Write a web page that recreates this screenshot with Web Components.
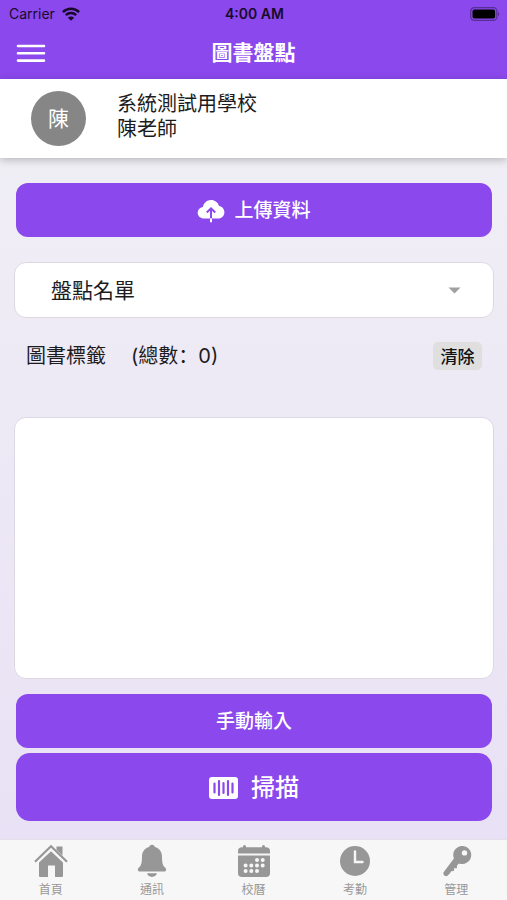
<!DOCTYPE html>
<html lang="zh-Hant">
<head>
<meta charset="utf-8">
<meta name="viewport" content="width=device-width, initial-scale=1">
<title>圖書盤點</title>
<style>
  html { --accent: #8b48ed; --line: #dcd9e2; --muted: #979797; }
  body {
    margin: 0;
    font-family: Inter, "Noto Sans CJK TC", sans-serif;
    font-size: 20px;
    line-height: 24px;
    color: #1c1c1e;
  }
</style>
</head>
<body>
<inventory-page></inventory-page>

<script>
const define = (name, html, setup) => {
  const template = document.createElement('template');
  template.innerHTML = html;
  customElements.define(name, class extends HTMLElement {
    constructor() {
      super();
      this.attachShadow({ mode: 'open' }).append(template.content.cloneNode(true));
    }
    connectedCallback() { if (setup) setup(this, this.shadowRoot); }
  });
};

const icons = {
  home: '<path d="M6 18.500 18 7.300l12 11.200V32a1 1 0 0 1-1 1h-7V21.500h-7V33H7a1 1 0 0 1-1-1z"/><path d="M2 17.700 18 2.200l16 15.500" fill="none" stroke="currentColor" stroke-width="2.200"/><path d="M23.500 2.500h6v9l-6-5.800z"/>',
  bell: '<path d="M18 .8c1.700 0 2.600 1 2.800 2.200 4.500 1.200 7.200 4.800 7.200 9.500 0 6.500.8 9.200 3.500 11.500 1.300 1.300.5 3.500-1.300 3.500H5.800c-1.800 0-2.600-2.200-1.300-3.500C7.200 21.700 8 19 8 12.500c0-4.700 2.700-8.300 7.200-9.500C15.400 1.800 16.300.8 18 .8z"/><path d="M13 29.300h10c-.7 2.200-2.600 3.600-5 3.600s-4.300-1.400-5-3.600z"/>',
  calendar: '<path d="M2 9.500V7.200a4 4 0 0 1 4-4h1V2.500a1.500 1.500 0 0 1 3 0v.7h16v-.7a1.500 1.500 0 0 1 3 0v.7h1a4 4 0 0 1 4 4v2.300z"/><path fill-rule="evenodd" d="M2 11.500h32V29a4 4 0 0 1-4 4H6a4 4 0 0 1-4-4z"/><path d="M21 16h.01M26.700 16h.01M9.600 21.500h.01M15.300 21.500h.01M21 21.500h.01M26.700 21.500h.01M9.600 27h.01M15.300 27h.01M21 27h.01" stroke="#f7f7f7" stroke-width="4" stroke-linecap="round"/>',
  clock: '<circle cx="18" cy="17" r="15"/><path d="M18 7.500V18h7.500" fill="none" stroke="#f7f7f7" stroke-width="2.400" stroke-linecap="round"/>',
  key: '<path fill-rule="evenodd" d="M24 2a9 9 0 1 1-3 17.400l-2 2.100-.1 2.700-2.800.1-.2 2.800-2.700.1-1.200 2.100-2.500 2.500c-2 1.500-5-1-3.900-3.500L15.900 14.500A9 9 0 0 1 24 2zm2.500 4.200a2.700 2.700 0 1 0 0 5.400 2.700 2.700 0 0 0 0-5.400z"/>'
};

define('status-bar', `
  <style>
    :host { display: grid; grid-template-columns: 1fr auto 1fr; align-items: center; height: 28px;
      padding: 0 7px 0 9px; background: var(--accent); color: #170b29; font-size: 14px; line-height: 18px; }
    .carrier { display: flex; align-items: center; gap: 7px; }
    .time { font-weight: 600; }
    .battery { justify-self: end; }
    svg { display: block; }
  </style>
  <span class="carrier">Carrier
    <svg width="18" height="14" viewBox="0 0 18 14" fill="none" stroke="currentColor" stroke-width="2.400" aria-hidden="true">
      <path d="M.9 5.100a11.600 11.600 0 0 1 16.200 0M3.800 8.200a7.400 7.400 0 0 1 10.400 0"/>
      <path d="M9 13.800 5.900 10.700a4.400 4.400 0 0 1 6.200 0z" fill="currentColor" stroke="none"/>
    </svg>
  </span>
  <span class="time">4:00 AM</span>
  <svg class="battery" width="30" height="14" viewBox="0 0 30 14" aria-hidden="true">
    <rect x=".7" y=".7" width="26.200" height="12.600" rx="3.600" fill="none" stroke="#572e93" stroke-width="1.200"/>
    <rect x="2.500" y="2.500" width="22.600" height="9" rx="2" fill="#000"/>
    <path d="M28 5v4c1.600-.6 1.600-3.400 0-4z" fill="#572e93"/>
  </svg>`);

define('nav-header', `
  <style>
    :host { display: grid; grid-template-columns: 1fr auto 1fr; align-items: center; height: 51px;
      padding: 0 16px; background: var(--accent); color: #fff; }
    h1 { margin: 0; padding-bottom: 2px; font-size: 21px; line-height: 28px; font-weight: 700; }
    button { justify-self: start; padding: 0; border: 0; background: none; color: inherit; }
    svg { display: block; }
  </style>
  <button type="button" aria-label="選單">
    <svg width="30" height="20" viewBox="0 0 30 20" stroke="currentColor" stroke-width="2.600" stroke-linecap="round">
      <path d="M2 2h26M2 9.300h26M2 16.600h26"/>
    </svg>
  </button>
  <h1><slot></slot></h1>`);

define('user-card', `
  <style>
    :host { display: flex; align-items: center; gap: 31px; height: 79px; padding: 0 31px; box-sizing: border-box;
      position: relative; background: #fff; box-shadow: 0 2px 8px rgba(0, 0, 0, .24); }
    .avatar { display: grid; place-items: center; width: 55px; height: 55px; border-radius: 50%;
      background: #868686; color: #fff; font-size: 21px; }
    .names { padding-bottom: 3px; line-height: 25px; }
  </style>
  <div class="avatar"><slot name="avatar"></slot></div>
  <div class="names"><slot></slot></div>`);

define('action-button', `
  <style>
    :host { display: block; }
    button { display: flex; align-items: center; justify-content: center; gap: 9px; width: 100%; height: 54px;
      padding: 2px 0 0; border: 0; border-radius: 12px; background: var(--accent); color: #fff;
      font: inherit; font-size: 19px; font-weight: 500; }
    :host([size="large"]) button { gap: 13px; height: 68px; border-radius: 14px; font-size: 24px; line-height: 32px; }
  </style>
  <button type="button"><slot name="icon"></slot><slot></slot></button>`);

define('select-field', `
  <style>
    :host { display: block; position: relative; }
    select { appearance: none; display: block; width: 100%; height: 56px; padding: 2px 48px 0 36px;
      border: 1px solid var(--line); border-radius: 12px; background: #fff; color: inherit;
      font: inherit; font-size: 21px; }
    svg { position: absolute; right: 33px; top: 25px; pointer-events: none; }
  </style>
  <select aria-label="盤點名單"></select>
  <svg width="13" height="7" viewBox="0 0 13 7" fill="#a0a0a0" aria-hidden="true"><path d="M.5.500h12l-6 6z"/></svg>`,
  (host, root) => {
    root.querySelector('select').replaceChildren(new Option(host.getAttribute('label')));
  });

define('tag-summary', `
  <style>
    :host { display: flex; align-items: center; height: 28px; padding: 0 12px; }
    .count { margin-left: 25px; font-family: Inter, "Noto Sans CJK SC", sans-serif; }
    button { margin-left: auto; width: 49px; height: 28px; padding: 2px 0 0; border: 0; border-radius: 5px;
      background: #dfdfdf; color: #111; font: inherit; font-size: 17px; font-weight: 500; line-height: 24px; }
  </style>
  <span><slot></slot></span>
  <span class="count" lang="zh-Hans"><slot name="count"></slot></span>
  <button type="button">清除</button>`);

define('tag-list', `
  <style>
    :host { display: flex; }
    textarea { flex: 1; box-sizing: border-box; padding: 12px; border: 1px solid var(--line);
      border-radius: 12px; background: #fff; color: inherit; font: inherit; resize: none; }
  </style>
  <textarea aria-label="圖書標籤"></textarea>`);

define('tab-item', `
  <style>
    :host { display: block; flex: 1; }
    a { display: flex; flex-direction: column; align-items: center; gap: 4px; padding-top: 4px;
      color: var(--muted); text-decoration: none; font-size: 12px; line-height: 16px; }
    svg { display: block; }
  </style>
  <a href="#"><svg width="36" height="34" viewBox="0 0 36 34" fill="currentColor" aria-hidden="true"></svg><span><slot></slot></span></a>`,
  (host, root) => { root.querySelector('svg').innerHTML = icons[host.getAttribute('icon')]; });

define('tab-bar', `
  <style>
    :host { display: block; background: #f7f7f7; border-top: 1px solid #e3dfe6; }
    nav { display: flex; height: 60px; }
  </style>
  <nav><slot></slot></nav>`);

define('inventory-page', `
  <style>
    :host { display: flex; flex-direction: column; min-height: 100vh;
      background: linear-gradient(#f0eef5 160px, #e8e0f5); }
    main { flex: 1; display: flex; flex-direction: column; padding: 25px 13px 18px 14px; }
    action-button { margin: 0 2px; }
    select-field { margin-top: 25px; }
    tag-summary { margin-top: 24px; }
    tag-list { flex: 1; min-height: 160px; margin: 47px 0 15px; }
    .scan { margin-top: 5px; }
  </style>
  <status-bar></status-bar>
  <nav-header>圖書盤點</nav-header>
  <user-card><span slot="avatar">陳</span>系統測試用學校<br>陳老師</user-card>
  <main>
    <action-button>
      <svg slot="icon" width="28" height="24" viewBox="0 0 28 24" fill="#fff" aria-hidden="true">
        <path d="M7.200 19.500C3.400 19.500.7 17 .7 13.700c0-3 2.200-5.300 5.200-5.800C6.700 3.800 10 1 14 1c3.800 0 7 2.400 8.100 6 3 .5 5.300 3 5.300 6.200 0 3.500-2.700 6.300-6.200 6.300z"/>
        <path d="M14 19.500V10M9.800 13.500 14 9.300l4.200 4.200" fill="none" stroke="#8b48ed" stroke-width="2"/>
        <path d="M14 19.500v3.700" stroke="#fff" stroke-width="2"/>
      </svg>上傳資料</action-button>
    <select-field label="盤點名單"></select-field>
    <tag-summary>圖書標籤<span slot="count" lang="zh-Hans">(總數：0)</span></tag-summary>
    <tag-list></tag-list>
    <action-button>手動輸入</action-button>
    <action-button class="scan" size="large">
      <svg slot="icon" width="29" height="22" viewBox="0 0 29 22" aria-hidden="true">
        <rect width="29" height="22" rx="3" fill="#fff"/>
        <path d="M5.500 6.500v9M10 4v14M14.500 6v10M19 4v14M23.500 6.500v9" stroke="#8b48ed" stroke-width="2.200" stroke-linecap="round"/>
      </svg>掃描</action-button>
  </main>
  <tab-bar>
    <tab-item icon="home">首頁</tab-item>
    <tab-item icon="bell">通訊</tab-item>
    <tab-item icon="calendar">校曆</tab-item>
    <tab-item icon="clock">考勤</tab-item>
    <tab-item icon="key">管理</tab-item>
  </tab-bar>`);
</script>
</body>
</html>
